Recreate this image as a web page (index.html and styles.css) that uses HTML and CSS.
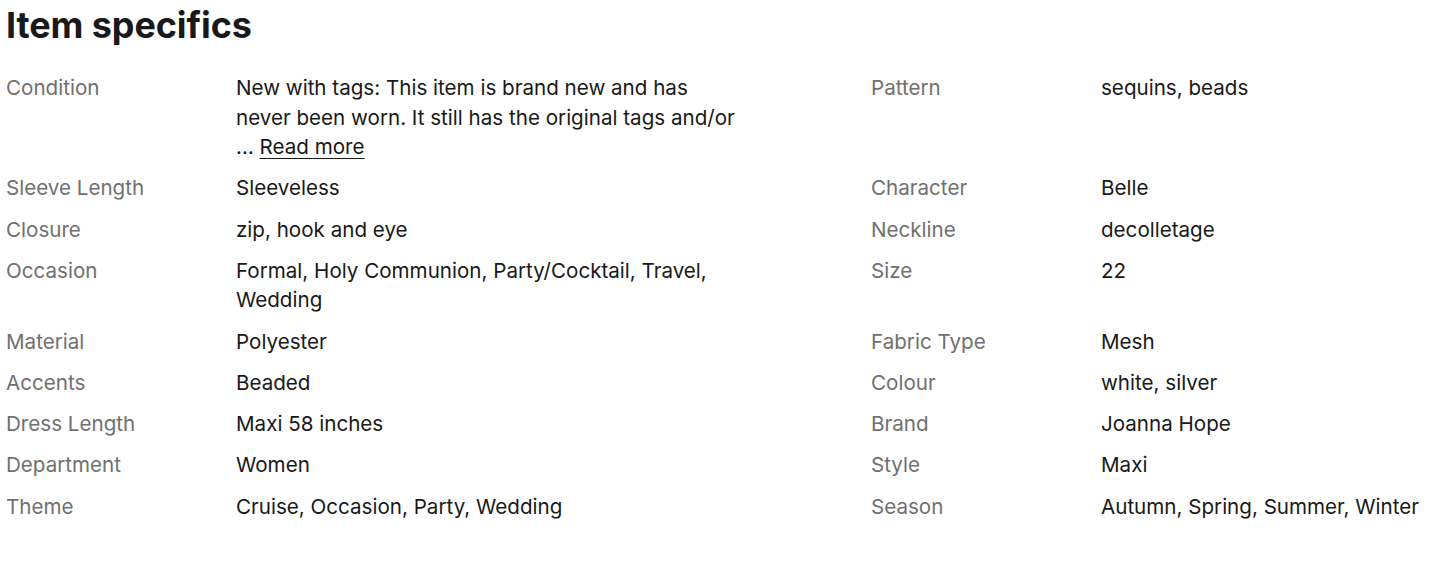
FILE: index.html
```html
<!DOCTYPE html>
<html lang="en">
<head>
<meta charset="utf-8">
<title>Item specifics</title>
<link rel="stylesheet" href="styles.css">
</head>
<body>
<section class="specifics">
  <h2 class="title">Item specifics</h2>
  <dl class="grid">
    <dt class="label">Condition</dt>
    <dd class="value"><span class="clamp">New with tags: This item is brand new and has never been worn. It still has the original tags and/or<br>… <a class="more" href="#">Read more</a></span></dd>
    <dt class="label">Pattern</dt>
    <dd class="value">sequins, beads</dd>

    <dt class="label">Sleeve Length</dt>
    <dd class="value">Sleeveless</dd>
    <dt class="label">Character</dt>
    <dd class="value">Belle</dd>

    <dt class="label">Closure</dt>
    <dd class="value">zip, hook and eye</dd>
    <dt class="label">Neckline</dt>
    <dd class="value">decolletage</dd>

    <dt class="label">Occasion</dt>
    <dd class="value">Formal, Holy Communion, Party/Cocktail, Travel, Wedding</dd>
    <dt class="label">Size</dt>
    <dd class="value">22</dd>

    <dt class="label">Material</dt>
    <dd class="value">Polyester</dd>
    <dt class="label">Fabric Type</dt>
    <dd class="value">Mesh</dd>

    <dt class="label">Accents</dt>
    <dd class="value">Beaded</dd>
    <dt class="label">Colour</dt>
    <dd class="value">white, silver</dd>

    <dt class="label">Dress Length</dt>
    <dd class="value">Maxi 58 inches</dd>
    <dt class="label">Brand</dt>
    <dd class="value">Joanna Hope</dd>

    <dt class="label">Department</dt>
    <dd class="value">Women</dd>
    <dt class="label">Style</dt>
    <dd class="value">Maxi</dd>

    <dt class="label">Theme</dt>
    <dd class="value">Cruise, Occasion, Party, Wedding</dd>
    <dt class="label">Season</dt>
    <dd class="value">Autumn, Spring, Summer, Winter</dd>
  </dl>
</section>
</body>
</html>
```

FILE: styles.css
```css
html, body {
  margin: 0;
  padding: 0;
  background: #ffffff;
}

body {
  font-family: Inter, "Noto Sans", "Liberation Sans", sans-serif;
  color: #191919;
}

.specifics {
  padding: 0 6px;
}

.title {
  margin: 0 0 23px;
  font-size: 36px;
  line-height: 50px;
  font-weight: 700;
  letter-spacing: -0.1px;
  color: #191919;
}

.grid {
  margin: 0;
  display: grid;
  grid-template-columns: 230px 635px 230px 1fr;
  row-gap: 11.75px;
  font-size: 20.6px;
  line-height: 29.5px;
}

.label {
  margin: 0;
  color: #707070;
}

.value {
  margin: 0;
  max-width: 512px;
  color: #191919;
}

.more {
  color: #191919;
  text-decoration: underline;
  text-underline-offset: 4px;
  text-decoration-thickness: 1px;
}
```
